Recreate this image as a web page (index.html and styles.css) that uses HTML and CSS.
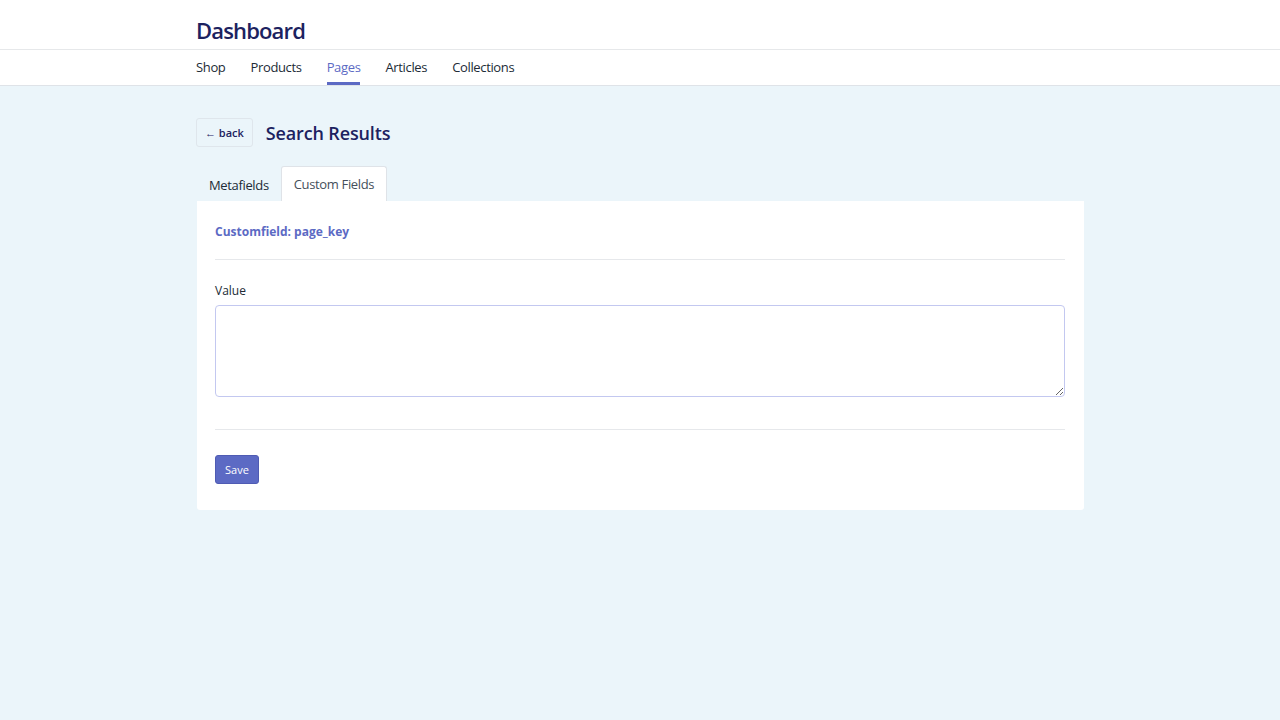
FILE: index.html
```html
<!DOCTYPE html>
<html lang="en">
<head>
<meta charset="utf-8">
<title>Dashboard</title>
<link rel="stylesheet" href="styles.css">
</head>
<body>
<header class="topbar">
  <div class="wrap">
    <h1 class="brand">Dashboard</h1>
  </div>
</header>
<nav class="navbar">
  <div class="wrap nav-links">
    <a class="nav-link" href="#">Shop</a>
    <a class="nav-link" href="#">Products</a>
    <a class="nav-link active" href="#">Pages</a>
    <a class="nav-link" href="#">Articles</a>
    <a class="nav-link" href="#">Collections</a>
  </div>
</nav>
<main class="wrap main">
  <div class="page-head">
    <a class="back-btn" href="#">← back</a>
    <h2 class="page-title">Search Results</h2>
  </div>
  <div class="tabs">
    <a class="tab" href="#">Metafields</a>
    <a class="tab active" href="#">Custom Fields</a>
  </div>
  <section class="card">
    <h3 class="field-title">Customfield: page_key</h3>
    <hr class="sep">
    <label class="label" for="v">Value</label>
    <textarea id="v" class="textarea"></textarea>
    <hr class="sep sep-lower">
    <button class="btn-primary" type="button">Save</button>
  </section>
</main>
</body>
</html>
```
FILE: styles.css
```css
* { box-sizing: border-box; }
html, body { margin: 0; padding: 0; }
body {
  background: #ebf5fa;
  font-family: "Open Sans", "Noto Sans", Arial, sans-serif;
  color: #212b36;
  min-height: 720px;
}
a { text-decoration: none; color: inherit; }
.wrap { width: 888px; margin: 0 auto; }

.topbar {
  background: #fff;
  border-bottom: 1px solid #e6e8ea;
  height: 50px;
}
.topbar .wrap { height: 49px; display: flex; align-items: flex-end; }
.brand {
  margin: 0 0 4px;
  font-size: 22px;
  font-weight: 600;
  color: #1c2260;
  letter-spacing: -0.85px;
}

.navbar {
  background: #fff;
  border-bottom: 1px solid #dfe3e8;
  height: 36px;
}
.nav-links { display: flex; gap: 25px; height: 35px; }
.nav-link {
  font-size: 13px;
  letter-spacing: -0.35px;
  color: #212b36;
  display: flex;
  align-items: center;
  padding-top: 2px;
  border-bottom: 3px solid transparent;
  height: 35px;
}
.nav-link.active { color: #5c6ac4; border-bottom-color: #5c6ac4; }

.main { padding-top: 32px; }
.page-head { display: flex; align-items: center; gap: 13px; height: 29px; }
.back-btn {
  display: inline-flex;
  align-items: center;
  height: 29px;
  padding: 0 8px;
  border: 1px solid #dfe6ec;
  border-radius: 3px;
  font-size: 11px;
  font-weight: 600;
  color: #1c2260;
}
.page-title {
  margin: 0;
  font-size: 18px;
  font-weight: 600;
  letter-spacing: -0.15px;
  color: #1c2260;
}

.tabs { display: flex; margin-top: 19px; padding-left: 1px; height: 35px; align-items: flex-end; }
.tab {
  height: 34px;
  display: flex;
  align-items: center;
  padding: 0 11px;
  font-size: 13px;
  letter-spacing: -0.35px;
  color: #212b36;
  border: 1px solid transparent;
  border-bottom: none;
  border-radius: 3px 3px 0 0;
}
.tab.active {
  background: #fff;
  color: #454f5b;
  border-color: #dfe3e8;
  height: 35px;
  padding: 0 12px;
}

.card {
  margin-left: 1px;
  background: #fff;
  border-radius: 0 0 3px 3px;
  padding: 22px 19px 26px 18px;
  height: 309px;
}
.field-title {
  margin: 0;
  font-size: 12px;
  font-weight: 700;
  color: #5c6ac4;
  line-height: 17px;
}
.sep {
  border: 0;
  border-top: 1px solid #e6e8eb;
  margin: 19px 0 22px;
}
.label {
  display: block;
  font-size: 12px;
  color: #212b36;
  margin-bottom: 6px;
  line-height: 17px;
}
.textarea {
  display: block;
  width: 100%;
  height: 92px;
  border: 1px solid #c3c8f0;
  border-radius: 4px;
  resize: vertical;
  font-family: inherit;
}
.sep-lower { margin: 32px 0 25px; }
.btn-primary {
  background: #5c6ac4;
  color: #fff;
  border: 1px solid #4f5bb3;
  border-radius: 3px;
  height: 29px;
  padding: 0 9px;
  font-family: inherit;
  font-size: 11px;
  cursor: pointer;
}
```
